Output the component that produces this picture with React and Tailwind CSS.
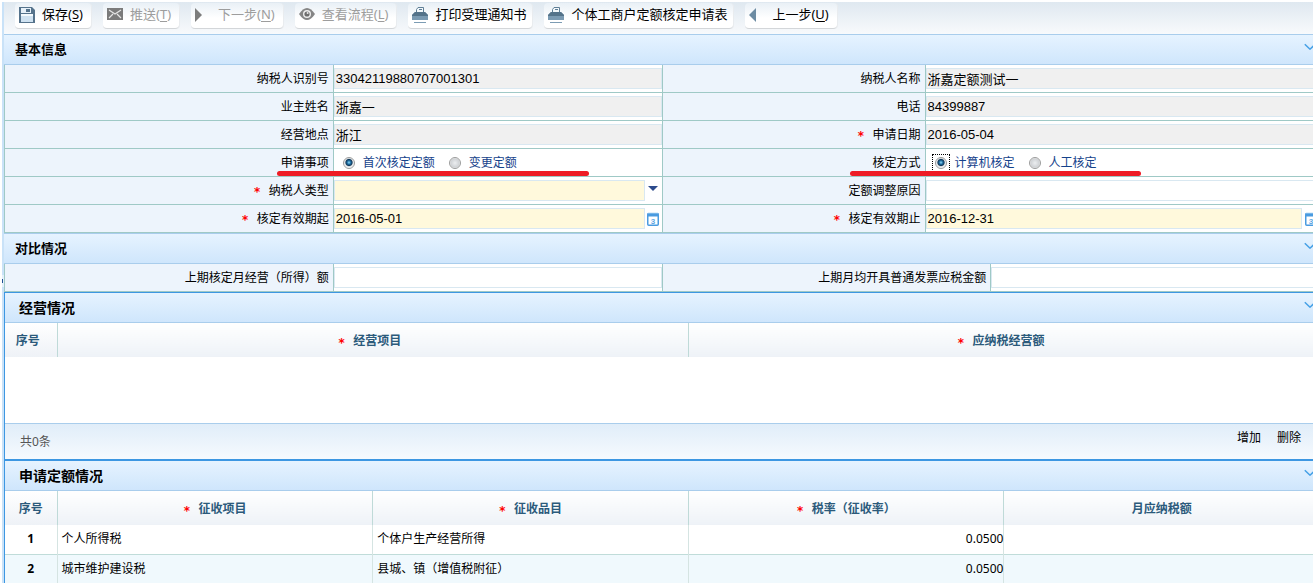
import React from "react";

const UI_FONT = "font-['Noto_Sans','Noto_Sans_CJK_SC',sans-serif]";
const VALUE_FONT = "font-['Liberation_Sans','Noto_Sans_CJK_SC',sans-serif]";

function SaveIcon() {
  return (
    <svg width="16" height="16" viewBox="0 0 16 16" aria-hidden="true">
      <path d="M0 0h13l3 3v13H0z" fill="#55738c" />
      <path d="M2 1h10v5H2z" fill="#e6f0f8" />
      <path d="M7 2h4v3H7z" fill="#55738c" />
      <path d="M2 7h12v8H2z" fill="#cfe2f1" />
      <path d="M2 7h12v2H2z" fill="#f4fafd" />
    </svg>
  );
}

function MailIcon() {
  return (
    <svg width="16" height="16" viewBox="0 0 16 16" aria-hidden="true">
      <path d="M0 1h16v12H0z" fill="#7b7b7b" />
      <path d="M2 3l6 4 6-4M2 11l4-4M14 11l-4-4" fill="none" stroke="#e4e4e4" strokeWidth="1.2" />
    </svg>
  );
}

function NextIcon() {
  return (
    <svg width="16" height="16" viewBox="0 0 16 16" aria-hidden="true">
      <path d="M0 1l7 7-7 7z" fill="#7d7d7d" />
    </svg>
  );
}

function PrevIcon() {
  return (
    <svg width="16" height="16" viewBox="0 0 16 16" aria-hidden="true">
      <path d="M7 1L0 8l7 7z" fill="#6d8ca3" />
    </svg>
  );
}

function EyeIcon() {
  return (
    <svg width="16" height="16" viewBox="0 0 16 16" aria-hidden="true">
      <path d="M0 7q8-12 16 0-8 12-16 0z" fill="#858585" />
      <circle cx="8" cy="7" r="4" fill="#efefef" />
      <circle cx="8" cy="7" r="2.6" fill="#6e6e6e" />
      <circle cx="8.6" cy="6" r="1" fill="#e6e6e6" />
    </svg>
  );
}

function PrinterIcon() {
  return (
    <svg width="16" height="16" viewBox="0 0 16 16" aria-hidden="true">
      <path d="M4.5 5V2.5L6 0.5H11.5V5" fill="#f3f8fb" stroke="#5f7f97" />
      <path d="M7 2.5h3" stroke="#5f7f97" />
      <path d="M3 5h10l3 3v5H0V8z" fill="#7a9ab2" />
      <path d="M3 5h10l3 3v1H0V8z" fill="#54738a" />
      <path d="M2 15h12v1H2z" fill="#7c9cb4" />
    </svg>
  );
}

function CalendarIcon() {
  return (
    <svg width="12" height="14" viewBox="0 0 12 14" aria-hidden="true">
      <rect x="0.75" y="1.75" width="10.5" height="11.5" rx="1" fill="#fff" stroke="#4a9be0" strokeWidth="1.5" />
      <path d="M0.5 1h11v3.5h-11z" fill="#4a9be0" />
      <path d="M2 0v2M4 0v2M6 0v2M8 0v2M10 0v2" stroke="#b8dcf6" strokeWidth="0.8" />
      <text x="6" y="11.5" textAnchor="middle" fontSize="8" fontWeight="700" fill="#5fa8e4" fontFamily="Liberation Sans, sans-serif">
        3
      </text>
    </svg>
  );
}

function ToolButton({ icon, text, hotkey, disabled }) {
  return (
    <button
      type="button"
      disabled={disabled}
      className="flex h-[26px] items-center gap-[7px] rounded-sm border-b border-[#d3d6d9] bg-linear-to-b from-[#e9f0f6] to-white to-60% pr-1.5 pb-0.5 pl-1 text-[13px] whitespace-nowrap text-black shadow-[1px_0_0_#e9ecef] disabled:text-[#9d9d9d]"
    >
      {icon}
      <span className={hotkey ? "pr-0.5" : ""}>
        {text}
        {hotkey && (
          <>
            (<u className="underline-offset-2">{hotkey}</u>)
          </>
        )}
      </span>
    </button>
  );
}

function SectionHeader({ title, large }) {
  return (
    <header className="flex h-[30px] items-center justify-between border-b border-[#a9cdec] bg-linear-to-b from-[#e6f3ff] to-[#cfe6fc] pr-1">
      <h2 className={large ? "pl-3.5 text-[14px] font-bold" : "pl-[11px] text-[13px] font-bold"}>{title}</h2>
      <button type="button" aria-label={title} className="mb-1.5">
        <svg width="12" height="8" viewBox="0 0 12 8" aria-hidden="true">
          <path d="M0.8 1.2L5.5 5.8Q6 6.2 6.5 5.8L11.2 1.2" fill="none" stroke="#45a0e6" strokeWidth="1.5" />
        </svg>
      </button>
    </header>
  );
}

function Star() {
  return (
    <span aria-hidden="true" className="inline-block pt-0.5 pr-2 align-middle font-['DejaVu_Sans_Mono',monospace] text-[12px] leading-3 font-bold text-[#f00]">
      *
    </span>
  );
}

function Label({ htmlFor, required, children }) {
  const Tag = htmlFor ? "label" : "span";
  return (
    <div className="flex items-center justify-end border-r border-b border-[#9fc9c6] bg-[#edf4fc] pr-1 text-[12px]">
      {required && <Star />}
      <Tag htmlFor={htmlFor}>{children}</Tag>
    </div>
  );
}

function Cell({ children }) {
  return <div className="flex min-w-0 items-center border-r border-b border-[#9fc9c6] bg-white">{children}</div>;
}

const fieldBase = "h-[21px] min-w-0 flex-1 appearance-none border border-[#d9e8f1] px-px text-[13px] text-black outline-none " + VALUE_FONT;

function Field({ id, label, required, value = "", kind }) {
  const plain = kind === "plain";
  const date = kind === "date";
  return (
    <>
      <Label htmlFor={id} required={required}>{label}</Label>
      <Cell>
        {kind === "select" ? (
          <>
            <select id={id} className={fieldBase + " bg-[#fff9dc]"} defaultValue="">
              <option value=""></option>
            </select>
            <span className="flex w-[17px] justify-center pb-1">
              <svg width="10" height="5" viewBox="0 0 10 5" aria-hidden="true">
                <path d="M0 0h10L5 5z" fill="#2c4b8c" />
              </svg>
            </span>
          </>
        ) : (
          <input
            id={id}
            type="text"
            defaultValue={value}
            readOnly={!plain && !date}
            className={fieldBase + (date ? " bg-[#fff9dc]" : plain ? " bg-white" : " bg-[#f0f0f0]")}
          />
        )}
        {date && (
          <button type="button" aria-label={label} className="flex w-[17px] justify-center">
            <CalendarIcon />
          </button>
        )}
      </Cell>
    </>
  );
}

function Radio({ name, label, checked, focused }) {
  return (
    <label className="flex items-center text-[12px] text-[#15428b]">
      <span className={focused ? "flex p-0.5 outline-1 outline-dotted outline-black" : "flex p-0.5"}>
        <input
          type="radio"
          name={name}
          defaultChecked={checked}
          className="size-3 appearance-none rounded-full border border-[#9a9b9b] bg-[radial-gradient(circle_at_50%_50%,#eceef0_0%,#cfd2d5_60%,#fff_75%)] outline-none checked:bg-[radial-gradient(circle_at_50%_45%,#8fdcfa_0%,#1c6a9e_25%,#12395a_42%,#dfe3e6_55%,#fff_75%)]"
        />
      </span>
      <span className="pl-1.5">{label}</span>
    </label>
  );
}

function RadioRow({ name, label, options, focused, mark }) {
  return (
    <>
      <Label>{label}</Label>
      <Cell>
        <div role="radiogroup" aria-label={label} className="relative flex h-[27px] items-center gap-3 pl-[7px]">
          {options.map((o, i) => (
            <Radio key={o} name={name} label={o} checked={i === 0} focused={focused && i === 0} />
          ))}
          <span aria-hidden="true" className={"absolute top-[22px] h-[5px] rounded-full bg-[#ee1c25] " + mark} />
        </div>
      </Cell>
    </>
  );
}

function Th({ required, children, first, inset }) {
  return (
    <th
      scope="col"
      className={
        "h-[34px] border-r border-[#bfdad8] bg-linear-to-b from-white to-[#eef2f7] pt-0.5 font-bold text-[#2b5a7b] " +
        (first ? "w-[52px] " : "") +
        (inset ? "pr-1.5" : "")
      }
    >
      {required && <Star />}
      {children}
    </th>
  );
}

const rows = [
  { no: 1, item: "个人所得税", kind: "个体户生产经营所得", rate: "0.0500" },
  { no: 2, item: "城市维护建设税", kind: "县城、镇（增值税附征）", rate: "0.0500" },
];

export default function App() {
  return (
    <div className={"relative bg-white pt-0.5 pr-0.5 pl-0.5 text-black " + UI_FONT}>
      <div className="overflow-hidden border-l-2 border-[#c9e2f8]">
        <main className="-mr-[7px]">
          <nav className="flex h-8 items-start gap-3 bg-linear-to-b from-[#dfe8f0] to-[#f8fafc] pt-px pl-[11px]">
            <ToolButton icon={<SaveIcon />} text="保存" hotkey="S" />
            <ToolButton icon={<MailIcon />} text="推送" hotkey="T" disabled />
            <ToolButton icon={<NextIcon />} text="下一步" hotkey="N" disabled />
            <ToolButton icon={<EyeIcon />} text="查看流程" hotkey="L" disabled />
            <ToolButton icon={<PrinterIcon />} text="打印受理通知书" />
            <ToolButton icon={<PrinterIcon />} text="个体工商户定额核定申请表" />
            <ToolButton icon={<PrevIcon />} text="上一步" hotkey="U" />
          </nav>

          <section className="border-t border-[#a9cdec]">
            <SectionHeader title="基本信息" />
            <div className="grid auto-rows-[28px] grid-cols-[25%_25%_20%_30%] border-l border-[#9fc9c6]">
              <Field id="taxId" label="纳税人识别号" value="33042119880707001301" />
              <Field id="taxName" label="纳税人名称" value="浙嘉定额测试一" />
              <Field id="owner" label="业主姓名" value="浙嘉一" />
              <Field id="phone" label="电话" value="84399887" />
              <Field id="place" label="经营地点" value="浙江" />
              <Field id="applyDate" label="申请日期" required value="2016-05-04" />
              <RadioRow name="applyItem" label="申请事项" options={["首次核定定额", "变更定额"]} mark="-left-[57px] w-[312px]" />
              <RadioRow name="method" label="核定方式" options={["计算机核定", "人工核定"]} focused mark="-left-[76px] w-[291px]" />
              <Field id="taxType" label="纳税人类型" required kind="select" />
              <Field id="reason" label="定额调整原因" kind="plain" />
              <Field id="validFrom" label="核定有效期起" required kind="date" value="2016-05-01" />
              <Field id="validTo" label="核定有效期止" required kind="date" value="2016-12-31" />
            </div>
          </section>

          <section className="border-t border-[#a9cdec]">
            <SectionHeader title="对比情况" />
            <div className="grid auto-rows-[28px] grid-cols-4 border-l border-[#9fc9c6]">
              <Field id="lastMonthly" label="上期核定月经营（所得）额" kind="plain" />
              <Field id="lastInvoice" label="上期月均开具普通发票应税金额" kind="plain" />
            </div>
          </section>

          <section className="border-t border-l border-[#3d97e2]">
            <SectionHeader title="经营情况" large />
            <table className="w-full table-fixed border-collapse text-[12px]">
              <thead>
                <tr>
                  <Th first inset>序号</Th>
                  <Th required inset>经营项目</Th>
                  <Th required inset>应纳税经营额</Th>
                </tr>
              </thead>
            </table>
            <div className="h-[66px] bg-white" />
            <footer className="flex h-9 justify-between border-t border-[#a9cdec] bg-linear-to-b from-[#e0edf9] to-[#f6fafe] pr-[19px] pl-[15px] text-[12px]">
              <span className="self-center text-[#555]">共0条</span>
              <span className="flex items-center gap-4 pb-2">
                <button type="button">增加</button>
                <button type="button">删除</button>
              </span>
            </footer>
          </section>

          <section className="border-t-2 border-l border-[#3d97e2]">
            <SectionHeader title="申请定额情况" large />
            <table className="w-full table-fixed border-collapse text-[12px]">
              <thead>
                <tr>
                  <Th first>序号</Th>
                  <Th required>征收项目</Th>
                  <Th required>征收品目</Th>
                  <Th required>税率（征收率）</Th>
                  <Th>月应纳税额</Th>
                </tr>
              </thead>
              <tbody>
                {rows.map((r) => (
                  <tr key={r.no} className="border-b border-[#c0dcd9] last:border-b-0 even:bg-[#f0f9fd]">
                    <td className="h-[29px] border-r border-[#d5e4e2] text-center font-bold">{r.no}</td>
                    <td className="border-r border-[#d5e4e2] pl-1">{r.item}</td>
                    <td className="border-r border-[#d5e4e2] pl-1">{r.kind}</td>
                    <td className="border-r border-[#d5e4e2] text-right">{r.rate}</td>
                    <td></td>
                  </tr>
                ))}
              </tbody>
            </table>
          </section>
        </main>
      </div>
      <svg className="absolute top-[275px] left-0.5" width="2" height="12" viewBox="0 0 2 12" aria-hidden="true">
        <path d="M0 0h2v12H0z" fill="#e3f0fb" />
        <path d="M0 4h1v4H0z" fill="#1f4f93" />
      </svg>
    </div>
  );
}
